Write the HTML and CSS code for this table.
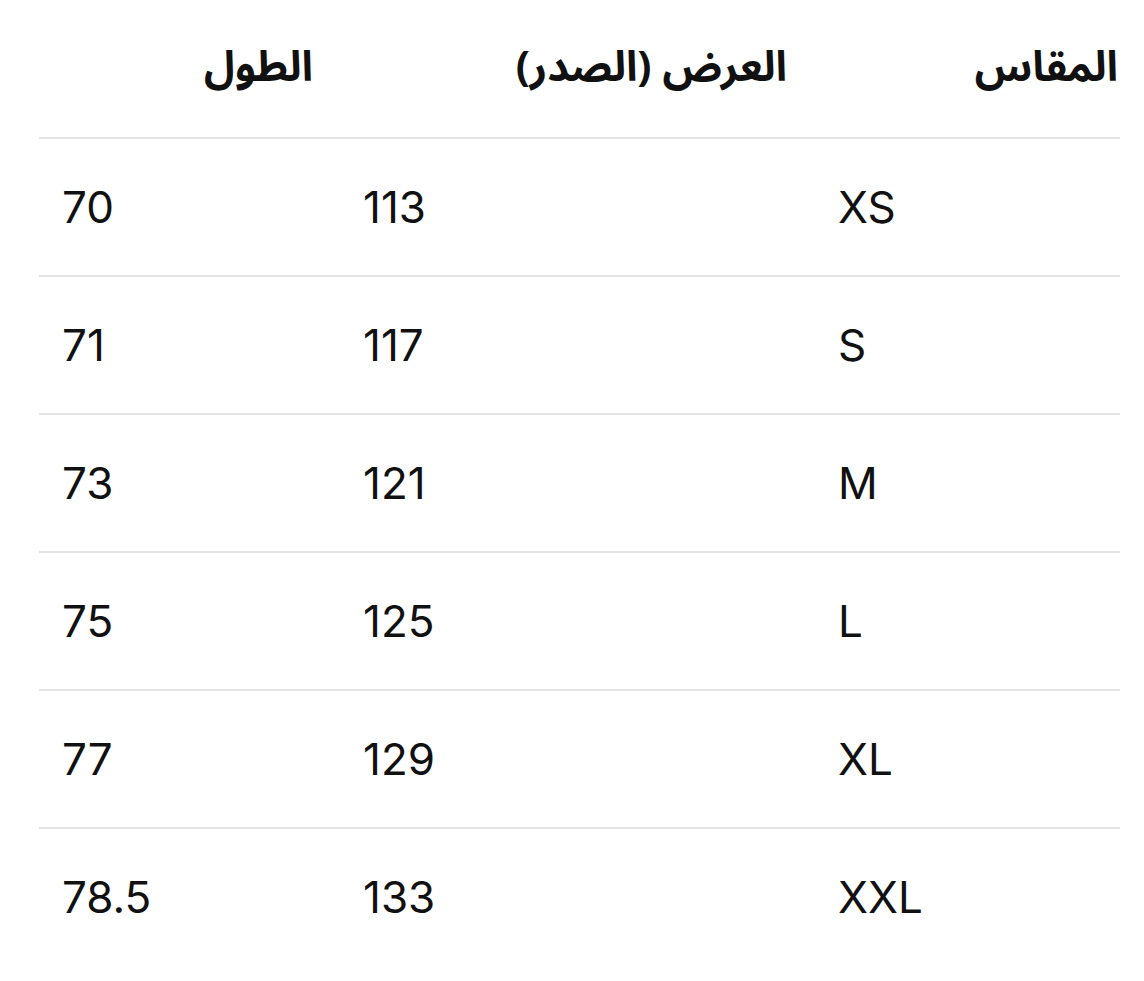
FILE: index.html
```
<!DOCTYPE html>
<html lang="ar" dir="rtl">
<head>
<meta charset="utf-8">
<link rel="stylesheet" href="styles.css">
</head>
<body>
<table class="size-table">
  <colgroup>
    <col class="c1">
    <col class="c2">
    <col class="c3">
  </colgroup>
  <thead>
    <tr>
      <th class="h1">المقاس</th>
      <th class="h2">العرض (الصدر)</th>
      <th class="h3">الطول</th>
    </tr>
  </thead>
  <tbody>
    <tr><td>XS</td><td>113</td><td>70</td></tr>
    <tr><td>S</td><td>117</td><td>71</td></tr>
    <tr><td>M</td><td>121</td><td>73</td></tr>
    <tr><td>L</td><td>125</td><td>75</td></tr>
    <tr><td>XL</td><td>129</td><td>77</td></tr>
    <tr><td>XXL</td><td>133</td><td>78.5</td></tr>
  </tbody>
</table>
</body>
</html>
```
FILE: styles.css
```
html, body {
  margin: 0;
  padding: 0;
  background: #ffffff;
}
body {
  width: 1144px;
  height: 981px;
  overflow: hidden;
}
.size-table {
  margin-right: 24px;
  width: 1081px;
  table-layout: fixed;
  border-collapse: collapse;
  color: #111111;
}
.c1 { width: 305px; }
.c2 { width: 475px; }
.c3 { width: 301px; }
.size-table th {
  height: 137px;
  padding: 0;
  text-align: right;
  vertical-align: middle;
  font-family: "Noto Sans Arabic", "DejaVu Sans", sans-serif;
  font-weight: 700;
  font-size: 42px;
  line-height: 1.2;
  border-bottom: 2px solid #e3e3e3;
}
.size-table th.h1 { padding-right: 2px; }
.size-table th.h2 { padding-right: 28px; }
.size-table th.h3 { padding-right: 27px; }
.size-table td {
  height: 136px;
  padding: 0 0 0 23px;
  direction: ltr;
  text-align: left;
  vertical-align: middle;
  font-family: "Inter", "Liberation Sans", sans-serif;
  font-size: 44px;
  font-weight: 400;
  border-bottom: 2px solid #e3e3e3;
}
.size-table tbody tr:last-child td {
  border-bottom: none;
}
```
